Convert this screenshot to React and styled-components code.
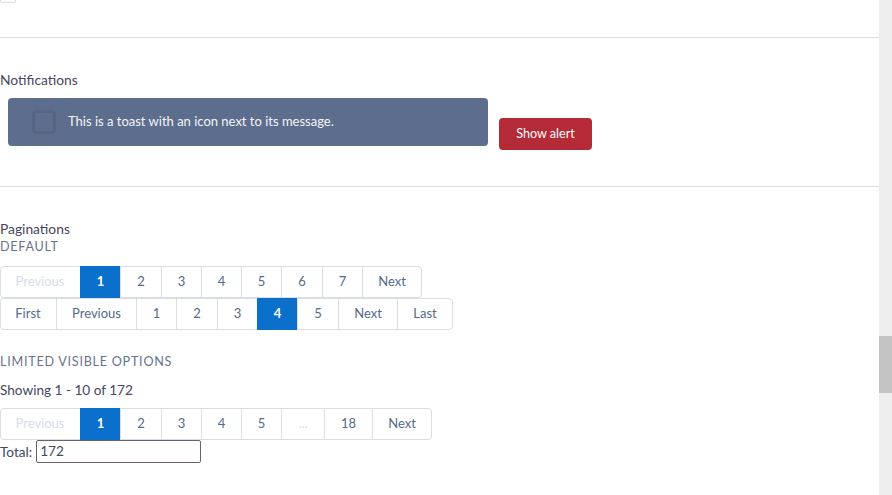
import React from "react";
import styled, { createGlobalStyle } from "styled-components";

const GlobalStyle = createGlobalStyle`
  html, body {
    margin: 0;
    height: 100%;
    overflow: hidden;
    background: #fff;
  }
  body {
    font-family: Lato, "Open Sans", sans-serif;
    font-size: 14px;
    color: #16325c;
  }
`;

const defaultFirst = [
  { label: "Previous", w: 80, disabled: true },
  { label: "1", w: 40, active: true },
  { label: "2", w: 41 },
  { label: "3", w: 40 },
  { label: "4", w: 40 },
  { label: "5", w: 40 },
  { label: "6", w: 41 },
  { label: "7", w: 40 },
  { label: "Next", w: 59 },
];

const defaultSecond = [
  { label: "First", w: 56 },
  { label: "Previous", w: 80 },
  { label: "1", w: 40 },
  { label: "2", w: 41 },
  { label: "3", w: 40 },
  { label: "4", w: 40, active: true },
  { label: "5", w: 41 },
  { label: "Next", w: 59 },
  { label: "Last", w: 55 },
];

const limited = [
  { label: "Previous", w: 80, disabled: true },
  { label: "1", w: 40, active: true },
  { label: "2", w: 41 },
  { label: "3", w: 40 },
  { label: "4", w: 40 },
  { label: "5", w: 40 },
  { label: "...", w: 43, disabled: true },
  { label: "18", w: 48 },
  { label: "Next", w: 59 },
];

function Pagination({ items }) {
  return (
    <Pager>
      {items.map((item, i) => (
        <PageCell key={i} $w={item.w} $active={item.active} $disabled={item.disabled}>
          {item.label}
        </PageCell>
      ))}
    </Pager>
  );
}

export default function App() {
  return (
    <>
      <GlobalStyle />
      <Screen>
        <Main>
          <Checkbox />
          <NotificationSection>
            <Title>Notifications</Title>
            <NotificationRow>
              <Toast>
                <ToastIcon />
                <span>This is a toast with an icon next to its message.</span>
              </Toast>
              <AlertButton>Show alert</AlertButton>
            </NotificationRow>
          </NotificationSection>
          <PaginationSection>
            <Title>Paginations</Title>
            <Caption>DEFAULT</Caption>
            <Pagination items={defaultFirst} />
            <Pagination items={defaultSecond} />
            <LimitedCaption>LIMITED VISIBLE OPTIONS</LimitedCaption>
            <Showing>Showing 1 - 10 of 172</Showing>
            <Pagination items={limited} />
            <TotalRow>
              <span>Total:</span>
              <TotalInput defaultValue="172" />
            </TotalRow>
          </PaginationSection>
        </Main>
        <ScrollTrack>
          <ScrollThumb />
        </ScrollTrack>
      </Screen>
    </>
  );
}

const Screen = styled.div`
  display: flex;
  height: 495px;
  overflow: hidden;
`;

const Main = styled.main`
  flex: 1;
  min-width: 0;
`;

const Checkbox = styled.div`
  box-sizing: border-box;
  width: 16px;
  height: 16px;
  margin-top: -13px;
  margin-bottom: 34px;
  border: 1px solid #d8dde6;
  border-radius: 2px;
`;

const NotificationSection = styled.section`
  box-sizing: border-box;
  height: 149px;
  padding-top: 33px;
  border-top: 1px solid #ddd;
`;

const PaginationSection = styled.section`
  padding-top: 33px;
  border-top: 1px solid #ddd;
`;

const Title = styled.div`
  height: 18px;
  line-height: 18px;
  color: #45465f;
  font-size: 13.8px;
`;

const NotificationRow = styled.div`
  display: flex;
  align-items: flex-start;
  gap: 11px;
  padding: 9px 0 0 8px;
`;

const Toast = styled.div`
  box-sizing: border-box;
  display: flex;
  align-items: center;
  gap: 12px;
  width: 480px;
  height: 48px;
  padding: 0 0 3px 24px;
  border-radius: 4px;
  background: #5d6d8e;
  color: #f4f5f8;
  font-size: 13px;
`;

const ToastIcon = styled.span`
  box-sizing: border-box;
  width: 24px;
  height: 24px;
  margin-top: 3px;
  border: 3px solid #566584;
  border-radius: 4px;
`;

const AlertButton = styled.button`
  box-sizing: border-box;
  width: 93px;
  height: 32px;
  margin-top: 20px;
  padding: 0 0 2px;
  border: 0;
  border-radius: 4px;
  background: #b42a37;
  color: #fff;
  font: inherit;
  font-size: 12.6px;
`;

const Caption = styled.div`
  height: 17px;
  line-height: 17px;
  margin-bottom: 11px;
  color: #68738f;
  font-size: 12.6px;
  letter-spacing: 0.75px;
`;

const LimitedCaption = styled(Caption)`
  margin: 23px 0 0;
`;

const Showing = styled.div`
  height: 18px;
  line-height: 18px;
  margin: 11px 0 9px;
  color: #45465f;
  font-size: 13.6px;
`;

const Pager = styled.div`
  box-sizing: border-box;
  display: flex;
  width: fit-content;
  height: 32px;
  border: 1px solid #d8dde6;
  border-radius: 4px;
`;

const PageCell = styled.span`
  box-sizing: border-box;
  display: flex;
  align-items: center;
  justify-content: center;
  width: ${(p) => p.$w}px;
  margin: ${(p) => (p.$active ? "-1px 0" : "0")};
  padding-bottom: 2px;
  border-left: 1px solid ${(p) => (p.$active ? "#0a70cb" : "#d8dde6")};
  background: ${(p) => (p.$active ? "#0a70cb" : "transparent")};
  color: ${(p) => (p.$active ? "#fff" : p.$disabled ? "#d8dde6" : "#54698d")};
  font-weight: ${(p) => (p.$active ? 700 : 400)};
  font-size: 13px;
  &:first-child {
    margin-left: -1px;
    border-left: 0;
  }
`;

const TotalRow = styled.div`
  display: flex;
  align-items: center;
  gap: 4px;
  color: #45465f;
  font-size: 13.6px;
`;

const TotalInput = styled.input`
  box-sizing: border-box;
  width: 165px;
  height: 23px;
  padding: 0 3px 1px;
  border: 1px solid #6e5f6a;
  border-radius: 2px;
  color: #45465f;
  font: inherit;
  outline: none;
`;

const ScrollTrack = styled.div`
  flex: 0 0 13px;
  background: #eeeeee;
`;

const ScrollThumb = styled.div`
  height: 57px;
  margin-top: 336px;
  background: #c4c4c4;
`;
